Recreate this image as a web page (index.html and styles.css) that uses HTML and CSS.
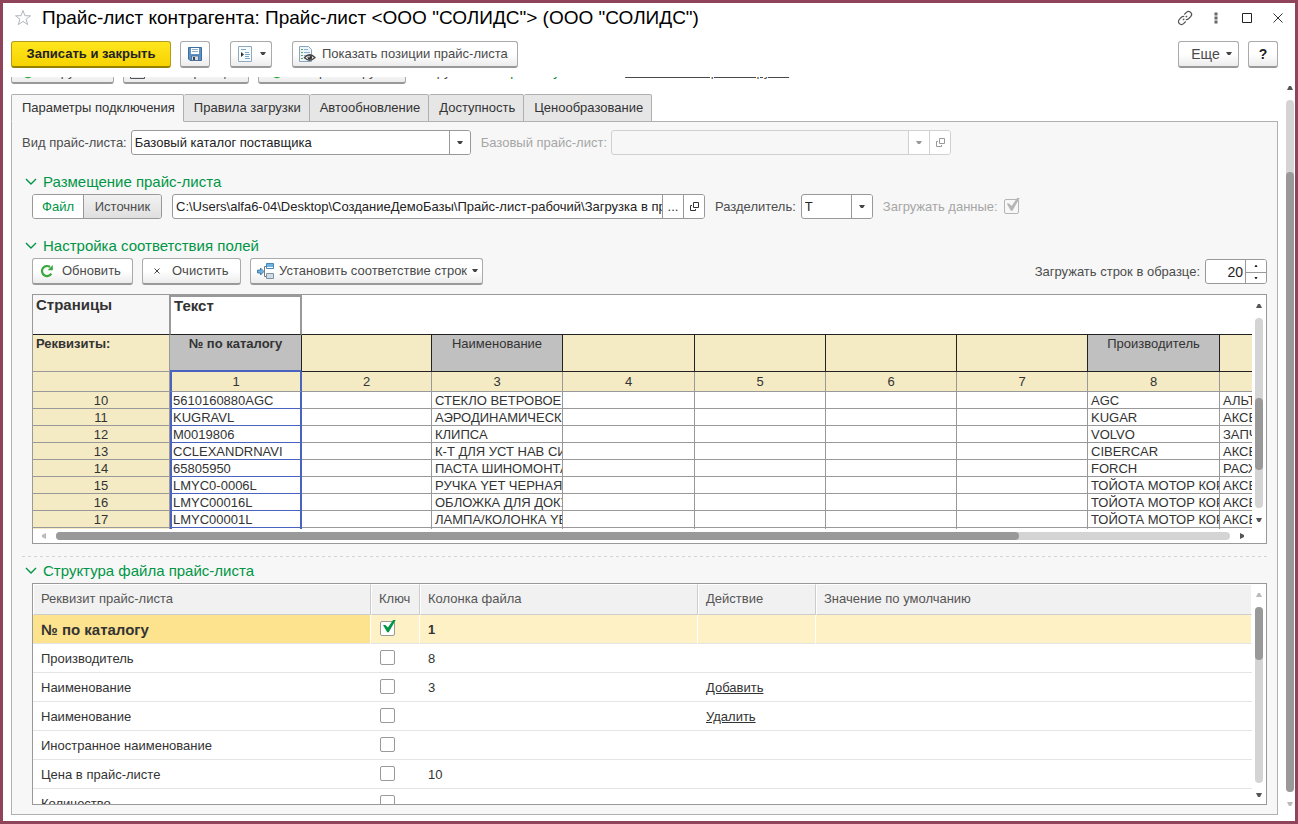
FILE: index.html
```html
<!DOCTYPE html>
<html lang="ru">
<head>
<meta charset="utf-8">
<title>Прайс-лист контрагента</title>
<link rel="stylesheet" href="styles.css">
</head>
<body>
<svg class="defs" aria-hidden="true">
  <symbol id="down" viewBox="0 0 6 4"><path d="M0 0h6L4 3H2z" fill="currentColor"/></symbol>
  <symbol id="tri-up" viewBox="0 0 6 4"><path d="M2 0h2l2 4H0z" fill="currentColor"/></symbol>
  <symbol id="tri-down" viewBox="0 0 6 4"><path d="M0 0h6L4 4H2z" fill="currentColor"/></symbol>
  <symbol id="tri-left" viewBox="0 0 4 6"><path d="M4 0v6L0 4V2z" fill="currentColor"/></symbol>
  <symbol id="tri-right" viewBox="0 0 4 6"><path d="M0 0v6l4-2V2z" fill="currentColor"/></symbol>
  <symbol id="open" viewBox="0 0 9 9"><path d="M3.500 .5h5v5h-5zM2 3.500H.5v5h5V7" fill="none" stroke="currentColor"/></symbol>
  <symbol id="chevron" viewBox="0 0 12 8"><path d="M1 1l5 5 5-5" fill="none" stroke="currentColor" stroke-width="1.400"/></symbol>
  <symbol id="refresh" viewBox="0 0 14 14"><path d="M11.300 9.600A5 5 0 1 1 10 3" fill="none" stroke="#3aa83f" stroke-width="2.200"/><path d="M12.800 1v5.200H7.600z" fill="#3aa83f"/></symbol>
</svg>
<div class="window">
  <header class="titlebar">
    <button class="plain" aria-label="Избранное"><svg width="18" height="18" viewBox="0 0 18 18"><path d="M9 1.500l1.900 5.200 5.600.1-4.400 3.400 1.600 5.400L9 12.400l-4.700 3.200 1.600-5.400L1.500 6.800l5.600-.1z" fill="none" stroke="#b0b5bd"/></svg></button>
    <h1>Прайс-лист контрагента: Прайс-лист &lt;ООО "СОЛИДС"&gt; (ООО "СОЛИДС")</h1>
    <div class="window-tools">
      <button class="plain" aria-label="Получить ссылку"><svg width="18" height="18" viewBox="0 0 18 18"><g transform="rotate(-45 9 9)" fill="none" stroke="#555" stroke-width="1.200"><path d="M7 12H4a3 3 0 0 1 0-6h3q2 0 2.500 1.500"/><path d="M11 6h3a3 3 0 0 1 0 6h-3q-2 0-2.500-1.500"/><path d="M6 9h2M10 9h2"/></g></svg></button>
      <button class="plain" aria-label="Меню"><svg width="4" height="12" viewBox="0 0 4 12"><path d="M.5.5h3v3h-3zM.5 4.500h3v3h-3zM.5 8.500h3v3h-3z" fill="#666"/></svg></button>
      <button class="plain" aria-label="Развернуть"><svg width="10" height="10" viewBox="0 0 10 10"><path d="M.5.5h9v9h-9z" fill="none" stroke="#222"/></svg></button>
      <button class="plain" aria-label="Закрыть"><svg width="10" height="10" viewBox="0 0 10 10"><path d="M.5.5l9 9M9.500.5l-9 9" stroke="#333"/></svg></button>
    </div>
  </header>

  <div class="commands">
    <button class="btn primary">Записать и закрыть</button>
    <button class="btn icon-only" aria-label="Записать"><svg width="14" height="14" viewBox="0 0 14 14"><path d="M.5.5h13v13H2L.5 12z" fill="#5f92c4" stroke="#3b6fa3"/><path d="M3 1h8v6H3z" fill="#fff"/><path d="M4 2.500h6M4 4.500h6" stroke="#9ab"/><path d="M3.500 9h7v4.500h-7z" fill="#d8dde2" stroke="#3b5f83" stroke-width=".7"/><path d="M5 10h2v3H5z" fill="#345"/></svg></button>
    <button class="btn menu-icon" aria-label="Отчеты"><svg width="14" height="16" viewBox="0 0 14 16"><path d="M.5.5h13v15H.5z" fill="#f8fbfd" stroke="#8fa9bd"/><path d="M3 3.500h5M7 6.500h4M7 8.500h5M7 10.500h4M7 12.500h5" stroke="#7ba7c9"/><path d="M3 6l3 2.500L3 11z" fill="#333"/></svg><svg class="arrow"><use href="#down"/></svg></button>
    <button class="btn show"><svg width="17" height="16" viewBox="0 0 17 16"><path d="M.5.5h9l3 3v12H.5z" fill="#edf4fa" stroke="#8aa5bb"/><path d="M2 3.500h2M2 6.500h2M2 9.500h2M2 12.500h2" stroke="#57a35c"/><path d="M5 3.500h4M5 6.500h6M5 9.500h2M5 12.500h2" stroke="#8fb0cc"/><path d="M5.500 11.500q5-5.500 10.500 0-5.500 5.500-10.500 0z" fill="#fff" stroke="#444" stroke-width="1.300"/><circle cx="10.800" cy="11.500" r="2.300" fill="#333"/><circle cx="10" cy="10.800" r=".8" fill="#fff"/></svg>Показать позиции прайс-листа</button>
    <span class="spacer"></span>
    <button class="btn more">Еще<svg class="arrow"><use href="#down"/></svg></button>
    <button class="btn icon-only help">?</button>
  </div>

  <div class="body">
    <main class="content">
      <div class="scrolled">
        <button class="btn load"><svg width="14" height="14"><use href="#refresh"/></svg>Загрузить</button>
        <button class="btn plan"><svg width="15" height="14" viewBox="0 0 15 14"><path d="M.5.5h14v13H.5z" fill="#dfe8ef" stroke="#555"/></svg>Планировщик</button>
        <button class="btn history"><svg width="14" height="14"><use href="#refresh"/></svg>История загрузки</button>
        <span class="state">Загрузка:</span>
        <span class="state ok">Завершена успешно</span>
        <a class="state log" href="#">Показать историю загрузки</a>
      </div>

      <nav class="tabs" role="tablist">
        <button class="tab active" role="tab" aria-selected="true">Параметры подключения</button>
        <button class="tab" role="tab">Правила загрузки</button>
        <button class="tab" role="tab">Автообновление</button>
        <button class="tab" role="tab">Доступность</button>
        <button class="tab" role="tab">Ценообразование</button>
      </nav>

      <section class="panel">
        <div class="row">
          <label for="kind">Вид прайс-листа:</label>
          <div class="field kind"><select id="kind"><option>Базовый каталог поставщика</option></select><span class="cell"><svg class="arrow"><use href="#down"/></svg></span></div>
          <label class="off" for="base">Базовый прайс-лист:</label>
          <div class="field base disabled"><select id="base" disabled><option></option></select><span class="cell"><svg class="arrow"><use href="#down"/></svg></span><button class="cell" disabled aria-label="Открыть"><svg width="9" height="9"><use href="#open"/></svg></button></div>
        </div>

        <button class="section"><svg width="12" height="8"><use href="#chevron"/></svg>Размещение прайс-листа</button>
        <div class="row inner">
          <div class="switch"><button class="on">Файл</button><button>Источник</button></div>
          <div class="field path"><input type="text" aria-label="Путь к файлу" value="C:\Users\alfa6-04\Desktop\СозданиеДемоБазы\Прайс-лист-рабочий\Загрузка в прайс-лист.xlsx"><button class="cell">...</button><button class="cell" aria-label="Открыть файл"><svg width="9" height="9"><use href="#open"/></svg></button></div>
          <label for="sep">Разделитель:</label>
          <div class="field sep"><select id="sep"><option>Т</option></select><span class="cell"><svg class="arrow"><use href="#down"/></svg></span></div>
          <label class="off" for="data">Загружать данные:</label>
          <input class="check" type="checkbox" id="data" checked disabled>
        </div>

        <button class="section"><svg width="12" height="8"><use href="#chevron"/></svg>Настройка соответствия полей</button>
        <div class="row inner tools">
          <button class="btn reload"><svg width="14" height="14"><use href="#refresh"/></svg>Обновить</button>
          <button class="btn clear"><svg width="6" height="6" viewBox="0 0 6 6"><path d="M.5.5l5 5M5.500.5l-5 5" stroke="#444"/></svg>Очистить</button>
          <button class="btn match"><svg width="17" height="16" viewBox="0 0 17 16"><path d="M.5 7h3V5l3.500 3.500L3.500 12v-2h-3z" fill="#6fb0de" stroke="#2f6c9c" stroke-width=".8"/><path d="M10 3.500H7.500v10H10" fill="none" stroke="#777"/><path d="M9.500.5h7v5h-7z" fill="#6cb2e4" stroke="#4c86b0"/><path d="M10 4.500h6" stroke="#fff"/><path d="M9.500 10.500h7v5h-7z" fill="#cfdbe5" stroke="#7e93a5"/></svg>Установить соответствие строк<svg class="arrow"><use href="#down"/></svg></button>
          <span class="spacer"></span>
          <label class="dark" for="rows">Загружать строк в образце:</label>
          <div class="field number"><input type="number" id="rows" value="20"><div class="spin"><button aria-label="Больше"><svg width="4" height="2"><use href="#tri-up"/></svg></button><button aria-label="Меньше"><svg width="4" height="2"><use href="#tri-down"/></svg></button></div></div>
        </div>

        <div class="box sheet">
          <div class="view">
            <table class="grid">
              <colgroup><col class="c0"><col class="c1"><col class="c2"><col class="cn"><col class="cw"><col class="cn"><col class="cn"><col class="cn"><col class="cw"><col class="cn"></colgroup>
              <thead>
                <tr class="pages"><th>Страницы</th><th class="txt">Текст</th><td colspan="8"></td></tr>
                <tr class="req"><th>Реквизиты:</th><th class="set key">№ по каталогу</th><td></td><td class="set">Наименование</td><td></td><td></td><td></td><td></td><td class="set">Производитель</td><td></td></tr>
                <tr class="nums"><th></th><td class="sel">1</td><td>2</td><td>3</td><td>4</td><td>5</td><td>6</td><td>7</td><td>8</td><td></td></tr>
              </thead>
              <tbody>
                <tr><th>10</th><td class="sel">5610160880AGC</td><td></td><td>СТЕКЛО ВЕТРОВОЕ</td><td></td><td></td><td></td><td></td><td>AGC</td><td>АЛЬТЕРНАТИВА</td></tr>
                <tr><th>11</th><td class="sel">KUGRAVL</td><td></td><td>АЭРОДИНАМИЧЕСКИЙ</td><td></td><td></td><td></td><td></td><td>KUGAR</td><td>АКСЕССУАРЫ</td></tr>
                <tr><th>12</th><td class="sel">M0019806</td><td></td><td>КЛИПСА</td><td></td><td></td><td></td><td></td><td>VOLVO</td><td>ЗАПЧАСТИ</td></tr>
                <tr><th>13</th><td class="sel">CCLEXANDRNAVI</td><td></td><td>К-Т ДЛЯ УСТ НАВ СИСТЕМЫ</td><td></td><td></td><td></td><td></td><td>CIBERCAR</td><td>АКСЕССУАРЫ</td></tr>
                <tr><th>14</th><td class="sel">65805950</td><td></td><td>ПАСТА ШИНОМОНТАЖНАЯ</td><td></td><td></td><td></td><td></td><td>FORCH</td><td>РАСХОДНИКИ</td></tr>
                <tr><th>15</th><td class="sel">LMYC0-0006L</td><td></td><td>РУЧКА YET ЧЕРНАЯ</td><td></td><td></td><td></td><td></td><td>ТОЙОТА МОТОР КОРП</td><td>АКСЕССУАРЫ</td></tr>
                <tr><th>16</th><td class="sel">LMYC00016L</td><td></td><td>ОБЛОЖКА ДЛЯ ДОКУМЕНТОВ</td><td></td><td></td><td></td><td></td><td>ТОЙОТА МОТОР КОРП</td><td>АКСЕССУАРЫ</td></tr>
                <tr><th>17</th><td class="sel">LMYC00001L</td><td></td><td>ЛАМПА/КОЛОНКА YET</td><td></td><td></td><td></td><td></td><td>ТОЙОТА МОТОР КОРП</td><td>АКСЕССУАРЫ</td></tr>
                <tr><th></th><td class="sel"></td><td></td><td></td><td></td><td></td><td></td><td></td><td>ТОЙОТА МОТОР КОРП</td><td></td></tr>
              </tbody>
            </table>
          </div>
          <div class="vscroll"><svg class="v"><use href="#tri-up"/></svg><div class="track"><div class="thumb mid"></div></div><svg class="v"><use href="#tri-down"/></svg></div>
          <div class="hscroll"><svg class="h dim"><use href="#tri-left"/></svg><div class="track"><div class="thumb wide"></div></div><svg class="h"><use href="#tri-right"/></svg></div>
        </div>

        <div class="divider"></div>
        <button class="section last"><svg width="12" height="8"><use href="#chevron"/></svg>Структура файла прайс-листа</button>

        <div class="box struct">
          <div class="view">
            <table class="list">
              <colgroup><col class="name"><col class="keycol"><col class="file"><col class="act"><col></colgroup>
              <thead><tr><th>Реквизит прайс-листа</th><th>Ключ</th><th>Колонка файла</th><th>Действие</th><th>Значение по умолчанию</th></tr></thead>
              <tbody>
                <tr class="current"><td>№ по каталогу</td><td class="mark"><input class="check" type="checkbox" aria-label="Ключ: № по каталогу" checked></td><td>1</td><td></td><td></td></tr>
                <tr><td>Производитель</td><td class="mark"><input class="check" type="checkbox" aria-label="Ключ: Производитель"></td><td>8</td><td></td><td></td></tr>
                <tr><td>Наименование</td><td class="mark"><input class="check" type="checkbox" aria-label="Ключ: Наименование"></td><td>3</td><td><a href="#">Добавить</a></td><td></td></tr>
                <tr><td>Наименование</td><td class="mark"><input class="check" type="checkbox" aria-label="Ключ: Наименование"></td><td></td><td><a href="#">Удалить</a></td><td></td></tr>
                <tr><td>Иностранное наименование</td><td class="mark"><input class="check" type="checkbox" aria-label="Ключ: Иностранное наименование"></td><td></td><td></td><td></td></tr>
                <tr><td>Цена в прайс-листе</td><td class="mark"><input class="check" type="checkbox" aria-label="Ключ: Цена"></td><td>10</td><td></td><td></td></tr>
                <tr><td>Количество</td><td class="mark"><input class="check" type="checkbox" aria-label="Ключ: Количество"></td><td></td><td></td><td></td></tr>
              </tbody>
            </table>
          </div>
          <div class="vscroll"><svg class="v dim"><use href="#tri-up"/></svg><div class="track"><div class="thumb top"></div></div><svg class="v"><use href="#tri-down"/></svg></div>
        </div>
      </section>
    </main>
    <div class="vscroll page"><svg class="v"><use href="#tri-up"/></svg><div class="track"><div class="thumb long"></div></div><svg class="v dim"><use href="#tri-down"/></svg></div>
  </div>
</div>
</body>
</html>
```
FILE: styles.css
```css
* { box-sizing: border-box; }
body { margin: 0; font: 13px/16px "Liberation Sans", Arial, sans-serif; color: #333; }
button, input, select { font: inherit; color: inherit; margin: 0; }
button { padding: 0; }
svg { display: block; flex: none; }
.defs { position: absolute; width: 0; height: 0; }
.spacer { flex: 1; }

.window { height: 100vh; min-height: 760px; display: flex; flex-direction: column; border: 3px solid #8f4459; background: #fff; overflow: hidden; }
.plain { width: 18px; height: 18px; border: 0; background: none; display: grid; place-items: center; }
.titlebar { display: flex; align-items: center; gap: 10px; height: 30px; padding: 0 8px 0 11px; }
.titlebar h1 { margin: 0; font-size: 19px; line-height: 24px; font-weight: 400; color: #000; flex: 1; white-space: nowrap; }
.window-tools { display: flex; align-items: center; gap: 13px; }

.commands { display: flex; padding: 8px 17px 9px 8px; }
.btn { display: flex; align-items: center; height: 27px; border: 1px solid #aaa; border-bottom: 2px solid #999; border-radius: 3px; background: linear-gradient(#fff 50%, #ececec); color: #4a4a4a; white-space: nowrap; }
.arrow { width: 6px; height: 4px; color: #444; }
.primary { justify-content: center; width: 160px; font-weight: 700; color: #222; background: linear-gradient(#ffe61e, #f7d300); border-color: #b39c1c; border-bottom-color: #968200; margin-right: 9px; }
.icon-only { width: 30px; justify-content: center; }
.menu-icon { width: 42px; margin: 0 20px; padding-left: 7px; gap: 8px; }
.show { width: 226px; padding-left: 6px; gap: 6px; }
.more { width: 61px; justify-content: center; gap: 6px; margin-right: 9px; padding-left: 6px; font-size: 14px; }
.help { font-weight: 700; font-size: 14px; color: #222; }

.body { flex: 1; min-height: 0; display: flex; padding-left: 8px; gap: 7px; }
.content { flex: 1; min-width: 0; display: flex; flex-direction: column; padding-bottom: 6px; }
.scrolled { display: flex; align-items: flex-end; height: 7px; flex: none; overflow: hidden; margin-bottom: 10px; white-space: nowrap; }
.scrolled .btn { padding-top: 4px; }
.load { width: 103px; margin-right: 9px; padding-left: 9px; gap: 6px; }
.plan { width: 126px; margin-right: 9px; padding-left: 6px; gap: 10px; }
.history { width: 148px; margin-right: 11px; padding-left: 11px; gap: 6px; }
.state { height: 27px; line-height: 30px; padding-right: 8px; color: #4a4a4a; }
.state.ok { color: #008a20; padding-right: 20px; }
.state.log { padding: 0; }

.tabs { display: flex; margin-bottom: -1px; z-index: 1; }
.tab { height: 28px; padding: 0 8px 0 10px; border: 1px solid #b0b0b0; border-left-width: 0; background: #e6e6e6; border-radius: 2px 2px 0 0; white-space: nowrap; color: #333; }
.tab.active { background: #f7f7f7; border-left-width: 1px; border-bottom-color: #f7f7f7; }
.panel { flex: 1; min-height: 0; display: flex; flex-direction: column; border: 1px solid #b0b0b0; background: #f7f7f7; padding: 8px 10px 9px; }

.row { display: flex; align-items: center; height: 25px; flex: none; white-space: nowrap; color: #4d4d4d; }
.inner { margin-left: 10px; }
.off { color: #a6a6a6; }
.field { display: flex; height: 25px; border: 1px solid #999; border-radius: 3px; background: #fff; overflow: hidden; color: #222; }
.field select, .field input { flex: 1; min-width: 0; width: 0; appearance: none; border: 0; background: none; padding: 0 0 0 3px; outline: 0; }
.field .cell { flex: none; display: grid; place-items: center; width: 21px; border: 0; border-left: 1px solid #999; background: #fff; color: #333; }
.field.disabled, .field.disabled .cell { border-color: #d0d0d0; }
.field.disabled { background: #f7f7f7; }
.field.disabled .cell, .field.disabled .arrow { color: #999; }
.kind { width: 340px; margin: 0 10px 0 4px; }
.base { width: 340px; margin-left: 4px; }
.path { width: 533px; margin: 0 10px; }
.sep { width: 72px; margin: 0 10px 0 5px; }
.number { width: 62px; margin-left: 5px; }
.number input { text-align: right; padding: 0 2px 0 0; font-size: 14px; appearance: textfield; }
.number input::-webkit-inner-spin-button { display: none; }
.spin { display: grid; grid-template-rows: 1fr 1fr; width: 21px; border-left: 1px solid #999; }
.spin button { display: grid; place-items: center; border: 0; background: #fff; }
.spin button + button { border-top: 1px solid #999; }

.switch { display: flex; height: 25px; width: 130px; border: 1px solid #999; border-radius: 3px; overflow: hidden; }
.switch button { flex: 1; border: 0; border-left: 1px solid #999; background: linear-gradient(#f2f2f2, #dfdfdf); color: #4d4d4d; }
.switch button.on { flex: none; width: 50px; border: 0; background: #fff; color: #009646; }

.section { display: flex; align-items: center; gap: 6px; align-self: flex-start; flex: none; height: 20px; margin: 16px 0 3px 3px; padding-top: 2px; border: 0; background: none; font-size: 15px; line-height: 18px; color: #009646; white-space: nowrap; }
.section.last { margin-top: 3px; }
.tools { height: 27px; margin-bottom: 9px; }
.reload { width: 101px; padding-left: 7px; gap: 8px; margin-right: 9px; }
.clear { width: 99px; padding-left: 11px; gap: 12px; margin-right: 9px; }
.match { width: 233px; padding-left: 6px; gap: 5px; }

.check { appearance: none; display: block; position: relative; flex: none; width: 15px; height: 15px; border: 1px solid #999; border-radius: 2px; background: #fff; }
.check:checked::after { content: ""; position: absolute; left: 2px; top: -2px; width: 13px; height: 13px; background: #009646; clip-path: polygon(0 42%, 18% 42%, 38% 62%, 80% 0, 100% 0, 44% 98%, 32% 98%); }
.check:disabled { border-color: #b5b5b5; background: #f7f7f7; margin-left: 6px; }
.check:disabled::after { background: #b5b5b5; }

.box { display: grid; grid-template-columns: 1fr 14px; margin-left: 10px; border: 1px solid #999; background: #fff; }
.view { overflow: hidden; min-width: 0; min-height: 0; }
.sheet { height: 250px; flex: none; grid-template-rows: 1fr 14px; }
.struct { flex: 1; min-height: 0; grid-template-rows: minmax(0, 1fr); }
table { border-collapse: separate; border-spacing: 0; table-layout: fixed; }
.grid { width: 1318px; }
.c0 { width: 137px; } .c1 { width: 132px; } .c2 { width: 130px; } .cn { width: 131px; } .cw { width: 132px; }
.grid th, .grid td { height: 17px; padding: 1px 0 0 3px; border: solid #999; border-width: 0 1px 1px 0; line-height: 15px; overflow: hidden; white-space: nowrap; vertical-align: top; text-align: left; }
.grid tbody th { background: #f4ebc5; font-weight: 400; text-align: center; padding-left: 0; }
.grid td.sel { border-color: #4a63c0; border-width: 0 2px 1px 2px; padding-left: 1px; }
.grid .pages th, .grid .pages td { height: 40px; font-size: 15px; line-height: 18px; border-bottom-color: #222; }
.grid .pages th:first-child { background: #f7f7f7; }
.grid .pages .txt { border: 2px solid #999; border-bottom: 1px solid #222; border-left-width: 1px; padding-top: 0; }
.grid .req th, .grid .req td { height: 37px; line-height: 15px; background: #f4ebc5; border-right-color: #222; border-bottom-color: #222; }
.grid .req th:first-child { border-color: #999; }
.grid .req .set { background: #c0c0c0; text-align: center; padding-left: 0; }
.grid .req .key { border-bottom: 2px solid #4a63c0; }
.grid .nums th, .grid .nums td { height: 20px; line-height: 18px; background: #f4ebc5; text-align: center; padding-left: 0; }
.grid .nums td.sel { border-bottom-color: #999; }

.vscroll { display: flex; flex-direction: column; align-items: center; gap: 10px; padding: 9px 0 7px; }
.hscroll { grid-column: 1 / 3; display: flex; align-items: center; gap: 10px; padding: 0 22px 0 9px; }
.v { width: 6px; height: 4px; color: #555; }
.h { width: 4px; height: 6px; color: #555; }
.dim { color: #bbb; }
.track { position: relative; flex: 1; width: 8px; border-radius: 4px; background: #d4d4d4; }
.hscroll .track { flex: 1; height: 8px; }
.thumb { position: absolute; left: 0; width: 100%; border-radius: 4px; background: #999; }
.mid { top: 42%; height: 38%; }
.wide { top: 0; height: 100%; width: 82%; }
.top { top: 0; height: 30%; }
.long { top: 72px; bottom: 0; }
.page { width: 10px; padding: 9px 0 15px; }

.divider { height: 1px; flex: none; margin-top: 12px; background: repeating-linear-gradient(90deg, #d4d4d4 0 3px, transparent 3px 6px); }

.list { width: 100%; }
.name { width: 338px; } .keycol { width: 49px; } .file { width: 278px; } .act { width: 118px; }
.list th { height: 31px; padding: 0 0 1px 7px; border: 1px solid #fff; border-right-color: #ccc; border-bottom-color: #ccc; background: #f1f1f1; font-weight: 400; text-align: left; color: #555; }
.list th:last-child { border-right-color: #fff; }
.list td { height: 29px; padding: 1px 8px 0; border-bottom: 1px solid #e4e4e4; white-space: nowrap; }
.list td.mark { padding: 0 0 2px 9px; }
.list .current td { background: #fef1c5; border-right: 1px solid #fff; font-weight: 700; }
.list .current td:first-child { background: #fee38e; font-size: 15px; }
.list a { color: #333; }
```
